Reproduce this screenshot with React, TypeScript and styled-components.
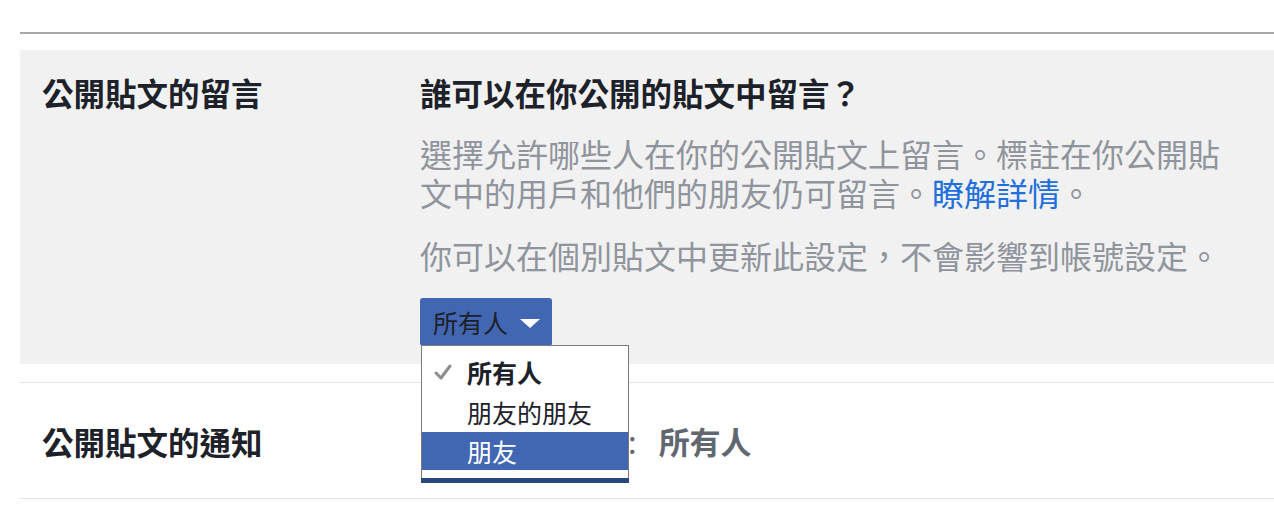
import styled, { createGlobalStyle } from 'styled-components';

const GlobalStyle = createGlobalStyle`
  html, body {
    margin: 0;
    padding: 0;
    background: #fff;
  }
  body {
    font-family: "Noto Sans CJK TC", "Noto Sans", sans-serif;
    overflow: hidden;
  }
`;

const Page = styled.div`
  width: 1274px;
  height: 526px;
  padding: 32px 0 0 20px;
  box-sizing: border-box;
`;

const TopRule = styled.div`
  height: 2px;
  background: #a7a7a7;
`;

const Section = styled.div<{ $open?: boolean }>`
  display: grid;
  grid-template-columns: 378px 1fr;
  align-items: ${(p) => (p.$open ? 'start' : 'center')};
  padding: ${(p) => (p.$open ? '22px 0 18px 22px' : '0 0 0 22px')};
  margin-top: ${(p) => (p.$open ? '16px' : '18px')};
  background: ${(p) => (p.$open ? '#f1f1f1' : '#fff')};
  border-top: ${(p) => (p.$open ? 'none' : '1px solid #e5e5e5')};
  border-bottom: ${(p) => (p.$open ? 'none' : '1px solid #e5e5e5')};
  height: ${(p) => (p.$open ? 'auto' : '117px')};
  box-sizing: border-box;
`;

const Label = styled.div`
  color: #1d2129;
  font-size: 31.5px;
  font-weight: 700;
  line-height: 40px;
`;

const Content = styled.div`
  max-width: 816px;
`;

const Title = styled.div`
  color: #1d2129;
  font-size: 31.5px;
  font-weight: 700;
  line-height: 40px;
`;

const Description = styled.p<{ $gap?: number }>`
  margin: 0;
  color: #90949c;
  font-size: 32px;
  line-height: 39px;
  margin-top: ${(p) => p.$gap ?? 22}px;
`;

const Link = styled.a`
  color: #216fdb;
  text-decoration: none;
`;

const SelectWrap = styled.div`
  position: relative;
  margin-top: 23px;
  width: fit-content;
`;

const SelectButton = styled.button`
  display: flex;
  align-items: center;
  gap: 12px;
  height: 48px;
  padding: 0 12px 0 13px;
  border: none;
  border-radius: 3px;
  background: #4267b2;
  color: #1d2129;
  font-family: inherit;
  font-size: 25px;
  cursor: pointer;
`;

const Caret = styled.span`
  width: 0;
  height: 0;
  border-left: 10px solid transparent;
  border-right: 10px solid transparent;
  border-top: 9px solid #fff;
  margin-top: 2px;
`;

const Menu = styled.ul`
  position: absolute;
  top: 47px;
  left: 1px;
  width: 208px;
  margin: 0;
  padding: 6px 0 0;
  list-style: none;
  background: #fff;
  border: 1px solid #7a7a7a;
  border-bottom: none;
  box-sizing: border-box;
  z-index: 2;
`;

const MenuItem = styled.li<{ $active?: boolean; $checked?: boolean }>`
  display: flex;
  align-items: center;
  height: ${(p) => (p.$active ? 38 : 40)}px;
  padding-left: 45px;
  position: relative;
  font-size: 25px;
  font-weight: ${(p) => (p.$checked ? 700 : 400)};
  color: ${(p) => (p.$active ? '#fff' : '#1d2129')};
  background: ${(p) => (p.$active ? '#4267b2' : 'transparent')};
`;

const Check = styled.svg`
  position: absolute;
  left: 12px;
  top: 12px;
`;

const MenuFooter = styled.div`
  height: 8px;
  border-bottom: 5px solid #29487d;
  margin: 0 -1px;
`;

const Value = styled.div`
  color: #606770;
  font-size: 31px;
  font-weight: 700;
  line-height: 40px;
`;

const ValueKey = styled.span`
  margin-right: 22px;
`;

const Colon = styled.span`
  margin-left: 22px;
  font-weight: 400;
`;

export default function App() {
  return (
    <>
      <GlobalStyle />
      <Page>
        <TopRule />
        <Section $open>
          <Label>公開貼文的留言</Label>
          <Content>
            <Title>誰可以在你公開的貼文中留言？</Title>
            <Description>
              選擇允許哪些人在你的公開貼文上留言。標註在你公開貼文中的用戶和他們的朋友仍可留言。
              <Link href="#">瞭解詳情</Link>。
            </Description>
            <Description $gap={24}>你可以在個別貼文中更新此設定，不會影響到帳號設定。</Description>
            <SelectWrap>
              <SelectButton type="button">
                所有人
                <Caret />
              </SelectButton>
              <Menu>
                <MenuItem $checked>
                  <Check width="18" height="16" viewBox="0 0 18 16">
                    <path d="M2 9 L7 14 L16 2" fill="none" stroke="#8d8d8d" strokeWidth="3" strokeLinecap="round" strokeLinejoin="round" />
                  </Check>
                  所有人
                </MenuItem>
                <MenuItem>朋友的朋友</MenuItem>
                <MenuItem $active>朋友</MenuItem>
                <MenuFooter />
              </Menu>
            </SelectWrap>
          </Content>
        </Section>
        <Section>
          <Label>公開貼文的通知</Label>
          <Value>
            <ValueKey>
              誰可以追蹤我
              <Colon>:</Colon>
            </ValueKey>
            所有人
          </Value>
        </Section>
      </Page>
    </>
  );
}
